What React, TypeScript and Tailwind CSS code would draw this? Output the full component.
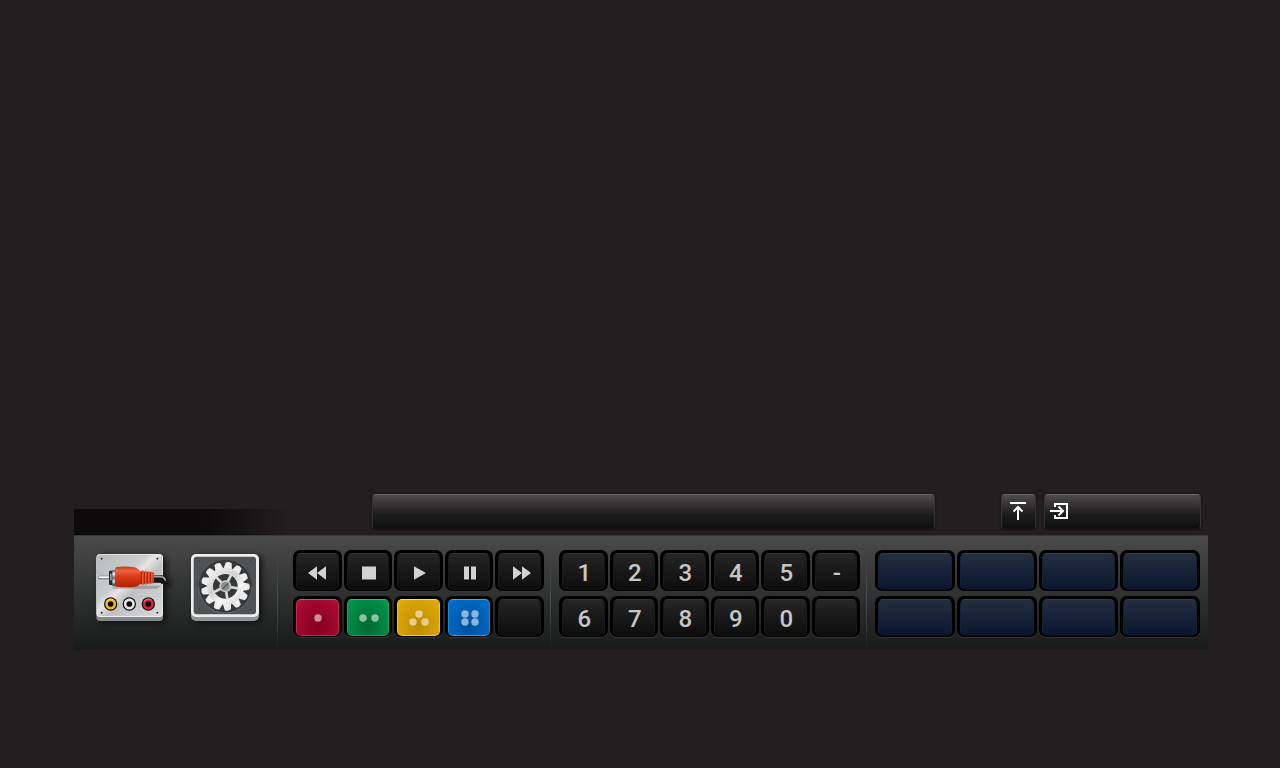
import { ReactNode } from "react";

interface KeyDef {
  label: string;
  face?: string;
  content?: ReactNode;
}

const DARK_FACE = "bg-linear-to-b from-[#252525] to-[#0d0d0d] border-t-[#363636] border-x-[#1a1a1a] border-b-[#111]";
const NAVY_FACE = "bg-linear-to-b from-[#242e3f] to-[#0b1730] border-t-[#363f4e] border-x-[#162136] border-b-[#07102a]";
const RED_FACE = "bg-radial-[at_50%_75%] from-[#85001f] to-[#b00c38] border-t-[#e4486c] border-x-[#c62850] border-b-[#c0284c]";
const GREEN_FACE = "bg-radial-[at_50%_75%] from-[#006a32] to-[#009950] border-t-[#2cc47c] border-x-[#14a862] border-b-[#1aa05c]";
const YELLOW_FACE = "bg-radial-[at_50%_75%] from-[#bd8b00] to-[#e2ad08] border-t-[#ffdf60] border-x-[#f2c434] border-b-[#f2c848]";
const BLUE_FACE = "bg-radial-[at_50%_75%] from-[#0050a0] to-[#0070cc] border-t-[#4aa6ee] border-x-[#2288dc] border-b-[#3c94e0]";

function Glyph({ d }: { d: string }) {
  return (
    <svg width="24" height="16" viewBox="0 0 24 16" fill="#d2d2d2" aria-hidden="true">
      <path d={d} />
    </svg>
  );
}

function Dots({ points }: { points: number[][] }) {
  return (
    <svg width="24" height="18" viewBox="0 0 24 18" fill="#fff" fillOpacity="0.55" aria-hidden="true">
      {points.map(([x, y]) => (
        <circle key={`${x}-${y}`} cx={x} cy={y} r="3.7" />
      ))}
    </svg>
  );
}

const mediaKeys: KeyDef[] = [
  { label: "Rewind", content: <Glyph d="M2 8 L11 1.2 V14.8 Z M11 8 L20 1.2 V14.8 Z" /> },
  { label: "Stop", content: <Glyph d="M5 1.5 H19 V14.5 H5 Z" /> },
  { label: "Play", content: <Glyph d="M7 1.2 L19 8 L7 14.8 Z" /> },
  { label: "Pause", content: <Glyph d="M6 1.5 H11 V14.5 H6 Z M13 1.5 H18 V14.5 H13 Z" /> },
  { label: "Fast forward", content: <Glyph d="M4 1.2 L13 8 L4 14.8 Z M13 1.2 L22 8 L13 14.8 Z" /> },
  { label: "Red", face: RED_FACE, content: <Dots points={[[12, 8]]} /> },
  { label: "Green", face: GREEN_FACE, content: <Dots points={[[6, 8], [18, 8]]} /> },
  { label: "Yellow", face: YELLOW_FACE, content: <Dots points={[[12, 4], [6, 12], [18, 12]]} /> },
  { label: "Blue", face: BLUE_FACE, content: <Dots points={[[7, 4], [17, 4], [7, 12], [17, 12]]} /> },
  { label: "Media extra" },
];

const numberKeys: KeyDef[] = ["1", "2", "3", "4", "5", "-", "6", "7", "8", "9", "0", ""].map((n) => ({
  label: n || "Number extra",
  content: n,
}));

const presetKeys: KeyDef[] = [1, 2, 3, 4, 5, 6, 7, 8].map((n) => ({
  label: `Preset ${n}`,
  face: NAVY_FACE,
}));

function Key({ label, face = DARK_FACE, content }: KeyDef) {
  return (
    <button
      type="button"
      aria-label={label}
      className="h-[41px] rounded-[7px] bg-black px-[3px] pt-[3px] pb-px shadow-[0_1px_1px_#363636]"
    >
      <span
        className={`flex h-full items-center justify-center rounded-[5px] border pt-0.5 pl-0.5 text-2xl leading-6 font-medium text-[#c6c6c6] ${face}`}
      >
        {content}
      </span>
    </button>
  );
}

function Divider() {
  return <div className="w-px self-stretch bg-linear-to-b from-transparent via-[#4c4d50] to-transparent" />;
}

function AvIcon() {
  return (
    <svg width="72" height="70" viewBox="18 27 216 210" aria-hidden="true">
      <defs>
        <linearGradient id="plate" x1="0" y1="0" x2="1" y2="1">
          <stop offset="0" stopColor="#b9babc" />
          <stop offset="0.38" stopColor="#cbccce" />
          <stop offset="0.46" stopColor="#e6e6e6" />
          <stop offset="0.58" stopColor="#c0c1c3" />
          <stop offset="1" stopColor="#dadada" />
        </linearGradient>
        <linearGradient id="plug" x1="0" y1="0" x2="0" y2="1">
          <stop offset="0" stopColor="#bd3315" />
          <stop offset="0.2" stopColor="#ee6440" />
          <stop offset="0.5" stopColor="#da3a18" />
          <stop offset="1" stopColor="#a82408" />
        </linearGradient>
        <linearGradient id="metal" x1="0" y1="0" x2="0" y2="1">
          <stop offset="0" stopColor="#444" />
          <stop offset="0.25" stopColor="#f8f8f8" />
          <stop offset="0.5" stopColor="#707478" />
          <stop offset="0.75" stopColor="#d8e0e4" />
          <stop offset="1" stopColor="#222" />
        </linearGradient>
      </defs>
      <rect x="19" y="34" width="200" height="194" rx="11" fill="#85888a" />
      <rect x="19" y="27" width="200" height="189" rx="11" fill="#f1f1f1" />
      <rect x="21" y="29" width="196" height="184" rx="9" fill="url(#plate)" />
      {[[35, 41], [202, 41], [35, 203], [202, 203]].map(([x, y]) => (
        <circle key={`${x}-${y}`} cx={x} cy={y} r="2.6" fill="#111" />
      ))}
      <path d="M68 122 H214 L200 131 H68 Z" fill="#555" fillOpacity="0.35" />
      <path d="M190 102 H214 Q224 102 224 116" fill="none" stroke="#151515" strokeWidth="23" />
      <path d="M192 95 H212 Q223 96 227 107" fill="none" stroke="#a4a4a4" strokeWidth="5" />
      <rect x="24" y="92" width="38" height="11" rx="4" fill="#63676a" />
      <rect x="25" y="94" width="38" height="6" rx="3" fill="#f4f5f5" />
      <rect x="57" y="77" width="12" height="43" rx="3" fill="#25282a" />
      <rect x="60" y="86" width="5" height="20" fill="#9ca2a6" />
      <rect x="67" y="75" width="13" height="47" fill="url(#metal)" />
      <path d="M79 66 Q106 62 134 67 Q146 71 150 78 L192 82 V114 L150 118 Q146 124 134 126 Q106 128 79 125 Q75 122 75 116 V74 Q75 69 79 66 Z" fill="url(#plug)" />
      <path d="M154 80 V117 M163 81 V116 M172 82 V115 M181 83 V114" stroke="#8f1c06" strokeWidth="3" />
      <path d="M158 76 V120 M167 77 V119 M176 79 V117 M185 80 V116" stroke="#e9532e" strokeWidth="5" />
      {[[62, "#f2b51c"], [118, "#e2e2e2"], [175, "#df2239"]].map(([x, color]) => (
        <g key={color}>
          <circle cx={x} cy="177" r="20" fill="#080808" />
          <circle cx={x} cy="177" r="12.5" fill="none" stroke={String(color)} strokeWidth="8" />
          <path d={`M${Number(x) - 13} 170 A15 15 0 0 1 ${Number(x) + 10} 165`} fill="none" stroke="#fff" strokeOpacity="0.5" strokeWidth="3" />
        </g>
      ))}
    </svg>
  );
}

const teeth = Array.from({ length: 13 }, (_, i) => (i * 360) / 13 + 8);

function SettingsIcon() {
  return (
    <svg width="68" height="70" viewBox="24 27 204 210" aria-hidden="true">
      <defs>
        <linearGradient id="gear" gradientUnits="userSpaceOnUse" x1="70" y1="55" x2="180" y2="195">
          <stop offset="0" stopColor="#fff" />
          <stop offset="0.45" stopColor="#d0d0d0" />
          <stop offset="0.65" stopColor="#f6f6f6" />
          <stop offset="1" stopColor="#c4c4c4" />
        </linearGradient>
      </defs>
      <rect x="24" y="34" width="204" height="194" rx="15" fill="#929496" />
      <rect x="24" y="27" width="204" height="189" rx="15" fill="#eeeeee" />
      <rect x="32" y="35" width="187" height="173" rx="9" fill="#505254" />
      <circle cx="127" cy="124" r="80" fill="#36383a" />
      <path d="M47 124 A80 80 0 0 0 207 124" fill="none" stroke="#747678" strokeWidth="2" />
      {[[49, 48], [203, 48], [49, 193], [203, 193]].map(([x, y]) => (
        <circle key={`${x}-${y}`} cx={x} cy={y} r="4" fill="#3b3d3f" stroke="#777" />
      ))}
      {teeth.map((angle) => (
        <path key={angle} d="M114 74 L118 53 Q127 48 136 53 L140 74 Z" fill="#ededed" transform={`rotate(${angle} 127 124)`} />
      ))}
      <circle cx="127" cy="124" r="46" fill="none" stroke="url(#gear)" strokeWidth="18" />
      {[-45, 27, 99, 171, 243].map((angle) => (
        <path key={angle} d="M127 111 V84" stroke="#dadada" strokeWidth="8" transform={`rotate(${angle} 127 124)`} />
      ))}
      <circle cx="127" cy="124" r="18" fill="#c8c8c8" />
      <circle cx="127" cy="124" r="13" fill="#898b8c" />
      <path d="M118 132 L136 115" stroke="#333" strokeWidth="3" />
    </svg>
  );
}

const barStyle =
  "rounded-sm border border-t-[#676667] border-x-[#343233] border-b-[#151313] bg-linear-to-b from-[#4d4b4c] via-[#1d1c1c] via-60% to-[#101010] shadow-[0_1px_3px_#151213]";

export default function App() {
  return (
    <main className="flex min-h-screen flex-col justify-end bg-[#231f20] pr-[72px] pb-[118px] pl-[74px] font-['Roboto',sans-serif]">
      <header className="flex items-start pr-[7px]">
        <div className="mt-[15px] h-[26px] w-[216px] bg-linear-to-r from-[#0c0a0b] from-60% to-[#231f20]" />
        <div className={`ml-[82px] h-[35px] flex-1 ${barStyle}`} />
        <button
          type="button"
          aria-label="Move to top"
          className={`ml-[66px] flex h-[35px] w-[35px] items-center justify-center pr-px pb-px ${barStyle}`}
        >
          <svg width="18" height="20" viewBox="0 0 18 20" fill="none" stroke="#fff" strokeWidth="2" aria-hidden="true">
            <path d="M1 2 H17 M9 19 V6 M4.5 10.5 L9 6 L13.5 10.5" />
          </svg>
        </button>
        <button
          type="button"
          aria-label="Exit"
          className={`ml-2 flex h-[35px] w-[157px] items-center pb-0.5 pl-[5px] ${barStyle}`}
        >
          <svg width="19" height="18" viewBox="0 0 19 18" fill="none" stroke="#fff" strokeWidth="2" aria-hidden="true">
            <path d="M5 5 V2 H17 V16 H5 V13 M0 9 H13 M8.5 4.5 L13 9 L8.5 13.5" />
          </svg>
        </button>
      </header>

      <section className="flex h-[115px] items-start border-t border-[#373737] bg-linear-to-b from-[#4a4a4b] to-[#191b1b] pt-3.5 pr-2 pl-[22px]">
        <button type="button" aria-label="AV input" className="mt-1 w-[72px] shrink-0 drop-shadow-[3px_2px_3px_#111]">
          <AvIcon />
        </button>
        <button type="button" aria-label="Settings" className="mt-1 ml-[23px] w-[68px] shrink-0 drop-shadow-[3px_2px_3px_#111]">
          <SettingsIcon />
        </button>
        <div className="ml-[18px] flex self-stretch">
          <Divider />
        </div>
        <div className="ml-[15px] grid flex-[251_1_0px] grid-cols-5 gap-x-0.5 gap-y-[5px]">
          {mediaKeys.map((key) => (
            <Key key={key.label} {...key} />
          ))}
        </div>
        <div className="ml-1.5 flex self-stretch">
          <Divider />
        </div>
        <div className="ml-2 grid flex-[301_1_0px] grid-cols-6 gap-x-0.5 gap-y-[5px]">
          {numberKeys.map((key) => (
            <Key key={key.label} {...key} />
          ))}
        </div>
        <div className="ml-1.5 flex self-stretch">
          <Divider />
        </div>
        <div className="ml-2 grid flex-[325_1_0px] grid-cols-4 gap-x-0.5 gap-y-[5px]">
          {presetKeys.map((key) => (
            <Key key={key.label} {...key} />
          ))}
        </div>
      </section>
    </main>
  );
}
